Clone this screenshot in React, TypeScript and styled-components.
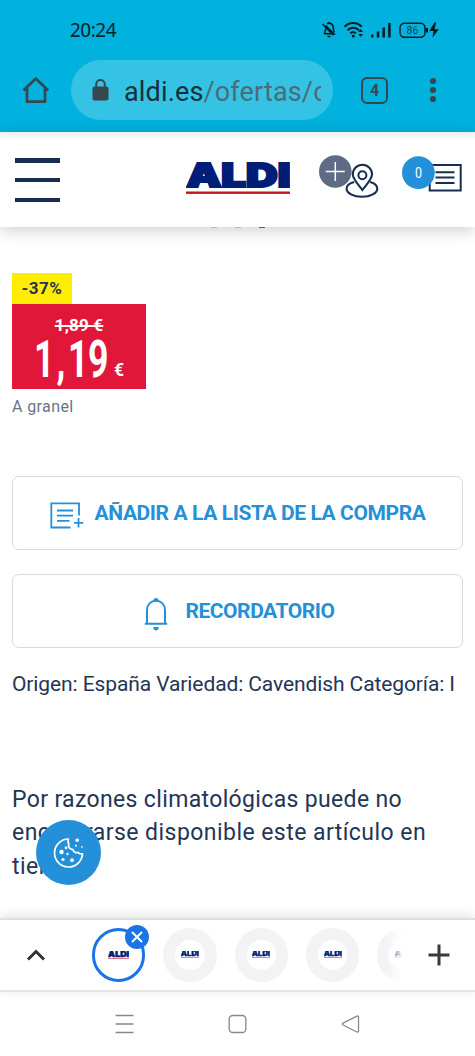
import React from 'react';
import styled, { createGlobalStyle } from 'styled-components';

const Global = createGlobalStyle`
  * { box-sizing: border-box; }
  body { margin: 0; background: #fff; font-family: Roboto, "Liberation Sans", sans-serif; color: #243556; }
  svg { display: block; flex: none; }
`;

const Screen = styled.div`
  width: 475px;
  height: 1056px;
  display: flex;
  flex-direction: column;
  overflow: hidden;
  background: #fff;
`;

const BrowserTop = styled.header`
  height: 132px;
  flex: none;
  background: #01b2de;
`;

const StatusBar = styled.div`
  height: 60px;
  display: flex;
  align-items: center;
  padding: 0 33px 0 70px;
`;

const Clock = styled.time`
  flex: 1;
  font: 400 19px/22px "Noto Sans", sans-serif;
  letter-spacing: -0.5px;
  color: #06222b;
`;

const AddressBar = styled.div`
  height: 60px;
  display: flex;
  align-items: center;
  padding-left: 21px;
`;

const AddressField = styled.div`
  width: 262px;
  height: 60px;
  margin: 0 28px 0 20px;
  padding: 0 12px 0 21px;
  border-radius: 30px;
  background: #34c3e5;
  display: flex;
  align-items: center;
  gap: 15px;
`;

const Url = styled.div`
  flex: 1;
  overflow: hidden;
  white-space: nowrap;
  font-size: 27px;
  line-height: 36px;
  letter-spacing: 0.15px;
  padding-top: 3px;
  color: #4c6b78;
  span { color: #14303a; }
`;

const TabCount = styled.div`
  width: 27px;
  height: 27px;
  border: 2.6px solid #37474f;
  border-radius: 6px;
  display: flex;
  align-items: center;
  justify-content: center;
  font-size: 16px;
  font-weight: 700;
  color: #37474f;
  margin-right: 41px;
`;

const SiteHeader = styled.div`
  height: 95px;
  flex: none;
  display: flex;
  align-items: flex-start;
  padding: 22px 12px 0 15px;
  background: linear-gradient(#eceeef, #fff 9px);
  box-shadow: 0 3px 16px rgba(0, 0, 0, 0.2);
  position: relative;
  z-index: 2;
`;

const MenuButton = styled.div`
  width: 45px;
  height: 44px;
  margin: 4px 126px 0 0;
  display: flex;
  flex-direction: column;
  justify-content: space-between;
`;

const MenuBar = styled.span`
  height: 4.5px;
  background: #172e52;
`;

const LogoSlot = styled.div`
  margin: 8px 29px 0 0;
`;

const StoreSlot = styled.div`
  margin-right: 22px;
`;

const Product = styled.main`
  flex: 1;
  min-height: 0;
  overflow: hidden;
  padding: 0 12px;
  white-space: nowrap;
`;

const TitleRemnant = styled.div`
  height: 2px;
  display: flex;
  gap: 18px;
  padding-left: 199px;
`;

const Mark = styled.i<{ $color: string }>`
  width: 6px;
  height: 1px;
  background: ${p => p.$color};
`;

const Discount = styled.div`
  width: 60px;
  height: 31px;
  margin-top: 44px;
  background: #ffed00;
  font-size: 17px;
  font-weight: 700;
  line-height: 31px;
  text-align: center;
  letter-spacing: 0.5px;
`;

const PriceBox = styled.div`
  width: 134px;
  height: 85px;
  background: #e01738;
  color: #fff;
  text-align: center;
`;

const OldPrice = styled.div`
  padding-top: 12px;
  font-size: 17px;
  line-height: 18px;
  font-weight: 700;
  letter-spacing: 0.2px;
  text-decoration: line-through;
  text-decoration-thickness: 1.5px;
`;

const PriceDrawing = styled.svg`
  width: 134px;
  height: 55px;
`;

const UnitNote = styled.div`
  margin-top: 8px;
  height: 20px;
  font-size: 16px;
  line-height: 20px;
  letter-spacing: 0.4px;
  color: #66758c;
`;

const ActionButton = styled.button<{ $gap: number; $top: number; $spacing: number; $shift?: number }>`
  width: 451px;
  height: 74px;
  margin: ${p => p.$top}px 0 0;
  padding: 0 0 0 ${p => p.$shift ?? 0}px;
  border: 1px solid #d5dadd;
  border-radius: 7px;
  background: #fff;
  display: flex;
  align-items: center;
  justify-content: center;
  gap: ${p => p.$gap}px;
  color: #2490d7;
  font: 700 21px/24px Roboto, sans-serif;
  letter-spacing: ${p => p.$spacing}px;
  svg { margin-top: 5px; }
`;

const Details = styled.p`
  margin: 24px 0 0;
  font-size: 21px;
  line-height: 24px;
  letter-spacing: -0.1px;
`;

const Notice = styled.p`
  margin: 87px 0 0;
  font-size: 23px;
  line-height: 33.4px;
  span { display: block; }
`;

const NoticeLine = styled.span<{ $spacing: number }>`
  letter-spacing: ${p => p.$spacing}px;
`;

const CookieButton = styled.div`
  position: absolute;
  left: 36px;
  top: 820px;
  width: 65px;
  height: 65px;
  border-radius: 50%;
  background: #2490d9;
  display: flex;
  align-items: center;
  justify-content: center;
`;

const TabStrip = styled.div`
  height: 74px;
  flex: none;
  display: flex;
  align-items: center;
  border-top: 2px solid #dedede;
  border-bottom: 2px solid #e4e4e4;
  background: #fff;
  box-shadow: 0 -2px 11px rgba(0, 0, 0, 0.13);
  position: relative;
  padding: 0 25px 0 26px;
`;

const Tabs = styled.div`
  width: 311px;
  height: 70px;
  margin: 0 26px 0 46px;
  display: flex;
  align-items: center;
  gap: 18px;
  overflow: hidden;
  mask-image: linear-gradient(90deg, #000 293px, transparent 311px);
`;

const Tab = styled.div<{ $active?: boolean }>`
  width: 53.3px;
  height: 53.3px;
  flex: none;
  border-radius: 50%;
  border: ${p => (p.$active ? '3px solid #1b73e8' : '12px solid #f1f3f4')};
  background: #fff;
  display: flex;
  align-items: center;
  justify-content: center;
  position: relative;
`;

const CloseBadge = styled.div`
  position: absolute;
  right: -6.5px;
  top: -6.5px;
  width: 24px;
  height: 24px;
  border-radius: 50%;
  background: #1b73e8;
  display: flex;
  align-items: center;
  justify-content: center;
`;

const SystemNav = styled.nav`
  height: 64px;
  flex: none;
  display: flex;
  align-items: center;
  justify-content: space-between;
  padding: 0 115px;
`;

const AldiLogo = ({ width, height }: { width: number; height: number }) => (
  <svg width={width} height={height} viewBox="0 0 104 33" preserveAspectRatio="none">
    <text x="0.5" y="25.2" fontFamily="Inter, sans-serif" fontWeight="900" fontSize="32.5" textLength="104"
      lengthAdjust="spacingAndGlyphs" fill="#001e78" stroke="#001e78" strokeWidth="2.2">ALDI</text>
    <rect x="0" y="29.5" width="104" height="2.4" fill="#c4161c" />
  </svg>
);

const HomeIcon = () => (
  <svg width="30" height="30" viewBox="0 0 30 30" fill="none" stroke="#37474f" strokeWidth="2.7" strokeLinejoin="round">
    <path d="M2.5 15.5 14.8 3.5 27.2 15.5M6 13V26.7H24V13" />
  </svg>
);

const LockIcon = () => (
  <svg width="17" height="22" viewBox="0 0 17 22">
    <rect x="0.5" y="7.5" width="16" height="14" rx="2" fill="#37474f" />
    <path d="M4.3 9V5a4.2 4 0 0 1 8.4 0V9" fill="none" stroke="#37474f" strokeWidth="2" />
  </svg>
);

const StatusIcons = () => (
  <svg width="121" height="20" viewBox="0 0 121 20" fill="none" stroke="#061a20" strokeWidth="1.6">
    <path d="M3 13.8h10L4.5 5.5M3 13.8c1.2-1 1.5-2.4 1.5-5M6 3.8c3.2-1.8 6.3.4 6.3 3.7 0 2 .3 3.4 1 4.6M1.5 4 12.5 15.300M8 2v1M6.5 16.500h3" />
    <path d="M23.5 6.7c4.8-5 12.5-5 17.3 0M26.5 10.2c3.2-3.3 8.3-3.3 11.4 0M29.3 13.4c1.7-1.6 3.9-1.6 5.5 0" strokeWidth="2" />
    <circle cx="32.3" cy="16" r="1.5" fill="#061a20" stroke="none" />
    <path d="m37.3 12 2.3-3 2.3 3zM37.3 14h4.6l-2.3 3z" fill="#061a20" stroke="none" />
    <path d="M51.2 14.5v3M57 11.5v6M62.7 7.5v10M68.4 3v14.5" strokeWidth="2.5" />
    <rect x="79" y="3.2" width="25" height="14" rx="4.5" strokeWidth="1.5" />
    <path d="M106 8v4.5" strokeWidth="2" />
    <text x="91.5" y="14" textAnchor="middle" fontSize="10.5" fontFamily="Roboto, sans-serif" fill="#12404e" stroke="none">86</text>
    <path d="M113.5 2.5 108.3 11h4.3l-1.2 6.7 6.4-8.5h-4.2l1.6-6.7z" fill="#061a20" stroke="none" />
  </svg>
);

const MoreIcon = () => (
  <svg width="8" height="26" viewBox="0 0 8 26" fill="#37474f">
    <circle cx="4" cy="4" r="3.1" /><circle cx="4" cy="13" r="3.1" /><circle cx="4" cy="22" r="3.1" />
  </svg>
);

const StoreIcon = () => (
  <svg width="61" height="46" viewBox="0 0 61 46" fill="none">
    <path d="M35.2 28c-5 1.300-7.600 4-7.600 6.700 0 4.300 6.700 8 15.400 8s15.300-3.700 15.300-8c0-2.700-2.700-5.400-7.200-6.700" stroke="#172e52" strokeWidth="2.1" />
    <path d="M43.4 36c-3.4-4.9-9.600-10.400-9.600-15.700a9.600 9.600 0 0 1 19.200 0c0 5.300-6.200 10.800-9.600 15.700Z" stroke="#172e52" strokeWidth="2.1" fill="#fff" />
    <circle cx="43.4" cy="21.2" r="4" stroke="#172e52" strokeWidth="2" />
    <circle cx="16.3" cy="17.5" r="16.3" fill="#5d6b85" />
    <path d="M16.3 8v19M6.8 17.5h19" stroke="#fff" strokeWidth="1.5" />
  </svg>
);

const ListIcon = () => (
  <svg width="60" height="40" viewBox="0 0 60 40" fill="none">
    <path d="M27.7 11h31v25.500h-31zM33.5 18.300h19M33.5 23.600h19M33.5 29h19" stroke="#172e52" strokeWidth="2" />
    <circle cx="16.4" cy="18.6" r="16.4" fill="#2490d9" />
    <text x="16.4" y="24" textAnchor="middle" fontSize="15" fontFamily="Roboto, sans-serif" fill="#fff"
      textLength="7" lengthAdjust="spacingAndGlyphs">0</text>
  </svg>
);

const AddListIcon = () => (
  <svg width="34" height="27" viewBox="0 0 34 27" fill="none" stroke="#2490d7" strokeWidth="1.8">
    <path d="M29 13.5V1.3H1.3V25.5H20.5M7 8.5h16M7 13.7h16M7 18.8h12.5M28.5 16v9.5M24 20.8h9.3" />
  </svg>
);

const BellIcon = () => (
  <svg width="24" height="34" viewBox="0 0 24 34" fill="none" stroke="#2490d7" strokeWidth="2">
    <path d="M3 26.5V13c0-5.3 3.8-9.2 9-9.2s9 3.9 9 9.2v13.5M.8 26.8h22.4" />
    <path d="M9.5 3.5a2.5 2.6 0 0 1 5 0ZM9.2 30h5.6c0 4.5-5.6 4.5-5.6 0Z" fill="#2490d7" stroke="none" />
  </svg>
);

const CookieIcon = () => (
  <svg width="32" height="32" viewBox="0 0 32 32" fill="#fff">
    <path d="M15.4 2A14 14 0 1 0 29.5 16.8c-1.8.4-3.2-.1-4.2-1.4-2.4.9-4.9-.3-5.3-2.8-3.4-.3-5.3-3-4.2-5.8-1-1.2-1.1-3-.4-4.8Z" fill="none" stroke="#fff" strokeWidth="1.7" strokeLinejoin="round" />
    <circle cx="8.5" cy="15" r="2.2" /><circle cx="13" cy="10.8" r="1.4" /><circle cx="14.5" cy="17" r="1.2" />
    <circle cx="10" cy="22.5" r="1.6" /><circle cx="19" cy="23.2" r="1.9" /><circle cx="24.2" cy="3.3" r="1.8" />
    <circle cx="23" cy="8.8" r="1" /><circle cx="29" cy="9.8" r=".9" />
  </svg>
);

export default function App() {
  return (
    <>
      <Global />
      <Screen>
        <BrowserTop>
          <StatusBar><Clock>20:24</Clock><StatusIcons /></StatusBar>
          <AddressBar>
            <HomeIcon />
            <AddressField><LockIcon /><Url><span>aldi.es</span>/ofertas/o</Url></AddressField>
            <TabCount>4</TabCount>
            <MoreIcon />
          </AddressBar>
        </BrowserTop>
        <SiteHeader>
          <MenuButton><MenuBar /><MenuBar /><MenuBar /></MenuButton>
          <LogoSlot><AldiLogo width={104} height={33} /></LogoSlot>
          <StoreSlot><StoreIcon /></StoreSlot>
          <ListIcon />
        </SiteHeader>
        <Product>
          <TitleRemnant><Mark $color="#d5d5d5" /><Mark $color="#d5d5d5" /><Mark $color="#d0465a" /></TitleRemnant>
          <Discount>-37%</Discount>
          <PriceBox>
            <OldPrice>1,89 €</OldPrice>
            <PriceDrawing viewBox="0 0 134 55" fill="#fff" fontFamily="Roboto, sans-serif" fontWeight="700">
              <text transform="scale(0.7 1)" x="31.4 63.5 80 108.6" y="42.7" fontSize="51">1,19</text>
              <text x="102" y="42" fontSize="19" textLength="10" lengthAdjust="spacingAndGlyphs">€</text>
            </PriceDrawing>
          </PriceBox>
          <UnitNote>A granel</UnitNote>
          <ActionButton $top={59} $gap={11} $spacing={-0.4}><AddListIcon />AÑADIR A LA LISTA DE LA COMPRA</ActionButton>
          <ActionButton $top={24} $gap={17} $spacing={-0.45} $shift={4}><BellIcon />RECORDATORIO</ActionButton>
          <Details>Origen: España Variedad: Cavendish Categoría: I</Details>
          <Notice>
            <NoticeLine $spacing={0.35}>Por razones climatológicas puede no</NoticeLine>
            <NoticeLine $spacing={0.45}>encontrarse disponible este artículo en</NoticeLine>
            <NoticeLine $spacing={0.45}>tienda.</NoticeLine>
          </Notice>
        </Product>
        <CookieButton><CookieIcon /></CookieButton>
        <TabStrip>
          <svg width="20" height="14" viewBox="0 0 20 14" fill="none" stroke="#333" strokeWidth="3"><path d="m2 11.5 8-8 8 8" /></svg>
          <Tabs>
            <Tab $active>
              <AldiLogo width={21} height={8} />
              <CloseBadge>
                <svg width="12" height="12" viewBox="0 0 12 12" stroke="#fff" strokeWidth="2"><path d="m1 1 10 10M11 1 1 11" /></svg>
              </CloseBadge>
            </Tab>
            {[1, 2, 3, 4].map(i => <Tab key={i}><AldiLogo width={18} height={7} /></Tab>)}
          </Tabs>
          <svg width="22" height="22" viewBox="0 0 22 22" stroke="#3a3a3d" strokeWidth="3"><path d="M11 .5v21M.5 11h21" /></svg>
        </TabStrip>
        <SystemNav>
          <svg width="19" height="20" viewBox="0 0 19 20" stroke="#888" strokeWidth="1.3"><path d="M.5 1.5h18M.5 10h18M.5 18.5h18" /></svg>
          <svg width="19" height="20" viewBox="0 0 19 20" fill="none" stroke="#888" strokeWidth="1.3"><rect x="1.2" y="1.5" width="16.6" height="17" rx="3.5" /></svg>
          <svg width="19" height="20" viewBox="0 0 19 20" fill="none" stroke="#888" strokeWidth="1.3" strokeLinejoin="round"><path d="M17.5 3v14c0 1-.7 1.4-1.6 1L2 11c-1-.5-1-1.4 0-1.9l13.900-7c.9-.5 1.600-.1 1.600.9Z" /></svg>
        </SystemNav>
      </Screen>
    </>
  );
}
